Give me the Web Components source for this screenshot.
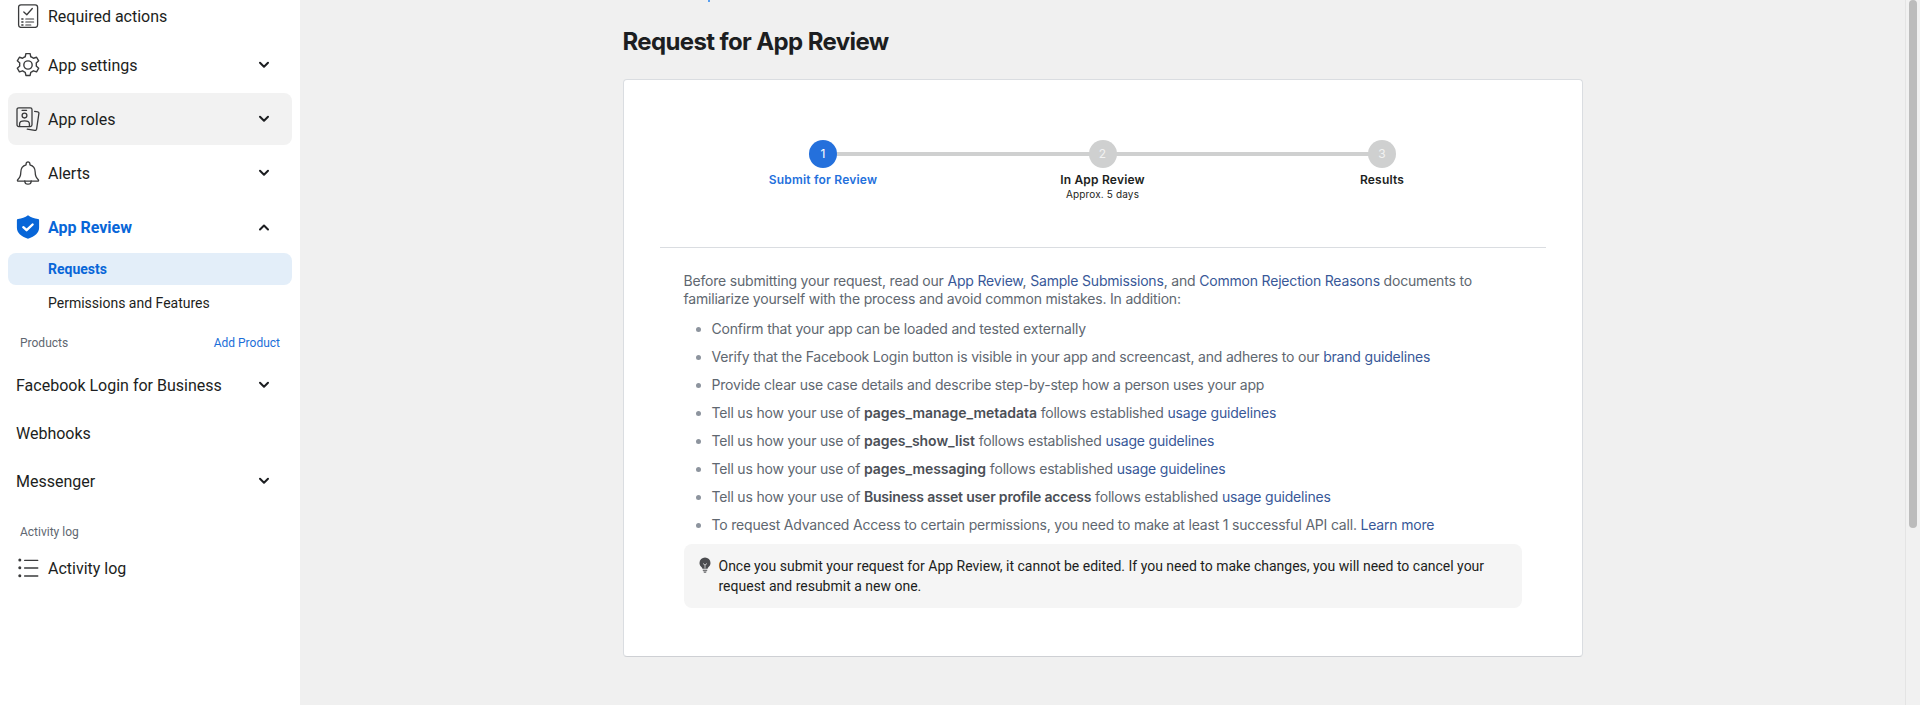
<!DOCTYPE html>
<html><head><meta charset="utf-8">
<style>
html,body{margin:0;height:100%;overflow:hidden;background:#f0f0f0}
body{font-family:"Inter","Liberation Sans",sans-serif}
</style></head><body>
<app-shell>
  <side-nav slot="side">
    <nav-item icon="check" first>Required actions</nav-item>
    <nav-item icon="gear" chevron="down">App settings</nav-item>
    <nav-item icon="badge" chevron="down" hover>App roles</nav-item>
    <nav-item icon="bell" chevron="down">Alerts</nav-item>
    <nav-item icon="shield" chevron="up" active>App Review</nav-item>
    <sub-item selected>Requests</sub-item>
    <sub-item>Permissions and Features</sub-item>
    <nav-label action="Add Product" style="padding-top:10px;padding-bottom:6px">Products</nav-label>
    <nav-item chevron="down" tall>Facebook Login for Business</nav-item>
    <nav-item tall>Webhooks</nav-item>
    <nav-item chevron="down" tall>Messenger</nav-item>
    <nav-label style="padding-top:15px">Activity log</nav-label>
    <nav-item icon="list" tall>Activity log</nav-item>
  </side-nav>
  <main-pane>
    <review-card>
      <step-bar>
        <step-item n="1" state="current">Submit for Review</step-item>
        <step-item n="2" note="Approx. 5 days">In App Review</step-item>
        <step-item n="3" last>Results</step-item>
      </step-bar>
      <review-body>
        <p>Before submitting your request, read our <a>App Review</a>, <a>Sample Submissions</a>, and <a>Common Rejection Reasons</a> documents to<br>familiarize yourself with the process and avoid common mistakes. In addition:</p>
        <ul>
          <li>Confirm that your app can be loaded and tested externally</li>
          <li>Verify that the Facebook Login button is visible in your app and screencast, and adheres to our <a>brand guidelines</a></li>
          <li>Provide clear use case details and describe step-by-step how a person uses your app</li>
          <li>Tell us how your use of <b class="u">pages_manage_metadata</b> follows established <a>usage guidelines</a></li>
          <li>Tell us how your use of <b class="u">pages_show_list</b> follows established <a>usage guidelines</a></li>
          <li>Tell us how your use of <b class="u">pages_messaging</b> follows established <a>usage guidelines</a></li>
          <li>Tell us how your use of <b>Business asset user profile access</b> follows established <a>usage guidelines</a></li>
          <li>To request Advanced Access to certain permissions, you need to make at least 1 successful API call. <a>Learn more</a></li>
        </ul>
        <tip-box>Once you submit your request for App Review, it cannot be edited. If you need to make changes, you will need to cancel your request and resubmit a new one.</tip-box>
      </review-body>
    </review-card>
  </main-pane>
  <fake-scrollbar></fake-scrollbar>
</app-shell>
<script>
const ICONS={
check:`<rect x="2.600" y=".8" width="19" height="22.600" rx="2.400"/><path d="M7.800 8l3 2.800 5.500-6.300"/><path d="M9.800 15h7.800M9.800 18h7.800M9.800 21h5" stroke-width="1.200"/><path d="M5.800 15h1.200M5.800 18h1.200M5.800 21h1.200" stroke-width="1.400"/>`,
gear:`<g transform="translate(12 12) scale(1.160) translate(-12 -12)" stroke-width="1.200"><circle cx="12" cy="12" r="3.600"/><path d="M10.200 2.200h3.600l.6 2.700a7.800 7.800 0 0 1 2.300 1.300l2.700-.9 1.800 3.100-2.100 1.900a7.800 7.800 0 0 1 0 2.600l2.100 1.900-1.800 3.100-2.700-.9a7.800 7.800 0 0 1-2.300 1.300l-.6 2.700h-3.600l-.6-2.700a7.800 7.800 0 0 1-2.300-1.300l-2.700.9-1.800-3.100 2.100-1.900a7.800 7.800 0 0 1 0-2.600l-2.100-1.900 1.800-3.100 2.700.9a7.800 7.800 0 0 1 2.300-1.300z"/></g>`,
badge:`<rect x="1" y=".8" width="15" height="18.800" rx="1.800"/><path d="M18.600 4.300l3.200.5a1.400 1.400 0 0 1 1.100 1.600l-2.300 15.800a1.500 1.500 0 0 1-1.700 1.200l-7.600-1.200"/><path d="M6 3.300h4.600" stroke-width="1.200"/><circle cx="8.500" cy="8.600" r="2.400"/><path d="M3.600 19v-2.300c0-1.700 2-2.800 4.900-2.800s4.900 1.100 4.900 2.800V19"/>`,
bell:`<path d="M12 .9a1.900 1.900 0 0 1 1.900 1.900v1c3.700 1 5.300 4 5.300 7.400 0 4 1.200 5.800 3.100 7.500.6.600.2 1.400-.6 1.400H2.300c-.8 0-1.200-.8-.6-1.400 1.900-1.700 3.100-3.500 3.100-7.500 0-3.400 1.600-6.400 5.300-7.400v-1A1.900 1.900 0 0 1 12 .9z"/><path d="M8.800 19.900a3.200 3.200 0 0 0 6.400 0"/>`,
shield:`<path fill="#0866d8" stroke="none" d="M12 .3c3 2.300 6.200 3.300 10 3.700.700.100 1.100.500 1.100 1.200v7.500c0 5-4 8.800-11.100 11C4.900 21.500.900 17.700.900 12.700V5.200c0-.700.400-1.100 1.100-1.200C5.800 3.600 9 2.600 12 .300z"/><path stroke="#fff" stroke-width="2.400" d="M7.300 12.200l3.300 3 6-5.700"/>`,
list:`<path d="M8.600 4.300h13.200M8.600 12h13.200M8.600 20h13.200" stroke-width="1.300"/><circle cx="3.800" cy="4" r="1.500" fill="#3a3b3c" stroke="none"/><circle cx="3.800" cy="11.800" r="1.500" fill="#3a3b3c" stroke="none"/><circle cx="3.800" cy="19.800" r="1.500" fill="#3a3b3c" stroke="none"/>`
};
function def(name,css,html){
  customElements.define(name,class extends HTMLElement{
    constructor(){super();this.attachShadow({mode:'open'});}
    connectedCallback(){
      this.shadowRoot.innerHTML=`<style>${css}</style>`+(typeof html==='function'?html(this):html);
    }
  });
}
def('app-shell',`:host{display:grid;grid-template-columns:300px 1fr;height:100vh;overflow:hidden}`,`<slot name="side"></slot><div style="display:flex;min-width:0;height:100vh;overflow:hidden"><slot></slot></div>`);
def('side-nav',`:host{display:block;background:#fff;height:100vh;overflow:hidden;box-sizing:border-box;padding:0 8px;font-family:Roboto,"Liberation Sans",sans-serif;color:#1c1e21}
.in{margin-top:-5px;display:flex;flex-direction:column}`,`<div class="in"><slot></slot></div>`);
def('nav-item',`:host{display:block;margin-top:2px;height:52px}
:host([first]){margin-top:0;height:42px}
:host([tall]){margin-top:0;height:48px}
.r{display:flex;align-items:center;height:100%;padding:0 8px;gap:8px;border-radius:8px;font-size:16px;color:#1c1e21;box-sizing:border-box}
:host([hover]) .r{background:#f2f2f2}
:host([active]) .r{color:#0866d8;font-weight:700}
.t{flex:1;white-space:nowrap}
svg.i{width:24px;height:24px;fill:none;stroke:#3a3b3c;stroke-width:1.300;stroke-linejoin:round;stroke-linecap:round;flex:none}
svg.c{width:12px;height:12px;fill:none;stroke:#1c1e21;stroke-width:2;stroke-linecap:round;stroke-linejoin:round;flex:none;margin-right:14px}`,
e=>{const i=e.getAttribute('icon'),c=e.getAttribute('chevron');
return `<div class="r">${i?`<svg class="i" viewBox="0 0 24 24">${ICONS[i]}</svg>`:''}<span class="t"><slot></slot></span>${c?`<svg class="c" viewBox="0 0 12 12"><path d="${c=='up'?'M2 8.500l4-4 4 4':'M2 3.700l4 4 4-4'}"/></svg>`:''}</div>`});
def('sub-item',`:host{display:block;height:36px}
:host([selected]){height:32px}
.r{display:flex;align-items:center;height:100%;padding-left:40px;border-radius:8px;font-size:14px;color:#1c1e21}
:host([selected]) .r{background:#e3eef9;color:#0866d8;font-weight:700}`,`<div class="r"><slot></slot></div>`);
def('nav-label',`:host{display:block}
.r{display:flex;align-items:center;justify-content:space-between;height:24px;padding:0 12px;font-size:12px;color:#606770}
.a{color:#1a6ed8}`,e=>`<div class="r"><span><slot></slot></span>${e.getAttribute('action')?`<span class="a">${e.getAttribute('action')}</span>`:''}</div>`);
def('main-pane',`:host{display:block;flex:1;min-width:0;background:#f0f0f0}
.col{width:960px;margin:0 auto;box-sizing:border-box}
.tick{height:2px;width:2px;margin-left:85px;background:#5aa0f0}
h1{margin:0;padding-top:24px;height:52px;box-sizing:border-box;font-size:24px;line-height:32px;font-weight:700;color:#1c1e21;letter-spacing:-.62px;font-family:Inter,"Liberation Sans",sans-serif}`,
`<div class="col"><div class="tick"></div><h1>Request for App Review</h1><slot></slot></div>`);
def('review-card',`:host{display:block;margin-top:25px;height:578px;box-sizing:border-box;background:#fff;border:1px solid #dadde1;border-bottom-color:#ced0d4;border-radius:4px;padding:60px 36px 0}`,`<slot></slot>`);
def('step-bar',`:host{display:flex;justify-content:center;height:107px;border-bottom:1px solid #dadde1;margin-bottom:24px}`,`<slot></slot>`);
def('step-item',`:host{display:flex;flex-direction:column;align-items:center;width:279.500px;position:relative;font-size:12px;line-height:16px;color:#1c1e21;font-weight:600;letter-spacing:.2px}
.n{width:28px;height:28px;border-radius:50%;background:#cfd0d0;color:#f2f2f2;font-size:12px;font-weight:400;display:flex;align-items:center;justify-content:center;position:relative;z-index:1;margin-bottom:4px}
:host([state=current]) .n{background:#2470dc;color:#fff}
:host([state=current]){color:#2470dc}
.line{position:absolute;left:50%;width:100%;top:12px;height:4px;background:#cfd0d0}
.note{font-size:10px;font-weight:400;line-height:13px;letter-spacing:.15px}`,
e=>`${e.hasAttribute('last')?'':'<div class="line"></div>'}<div class="n">${e.getAttribute('n')}</div><div><slot></slot></div>${e.getAttribute('note')?`<div class="note">${e.getAttribute('note')}</div>`:''}`);
def('review-body',`:host{display:block;padding:0 24px 0 24px;font-size:14px;line-height:18px;color:#606770;letter-spacing:-.19px}
::slotted(p){margin:0 0 12px}
::slotted(ul){margin:0;padding:0 0 0 28px}`,`<slot></slot>`);
def('tip-box',`:host{display:block;margin-top:6px;letter-spacing:0}
.r{display:flex;gap:6px;background:#f5f5f5;border-radius:8px;height:64px;box-sizing:border-box;padding:12px 16px 0 13px;font-family:Roboto,"Liberation Sans",sans-serif;font-size:14px;line-height:20px;color:#1c1e21}
svg{width:16px;height:16px;flex:none;margin-top:1px;fill:#4b4c4f}`,
`<div class="r"><svg viewBox="0 0 16 16"><path d="M8 .5a5.500 5.500 0 0 0-5.500 5.500c0 2 1 3.100 1.900 4.100.5.600.9 1.100 1 1.700h5.200c.1-.6.500-1.100 1-1.700.9-1 1.900-2.100 1.900-4.100A5.500 5.500 0 0 0 8 .5zM5.800 12.800h4.400v.9H5.800zM6.400 14.500h3.200a1.600 1.200 0 0 1-3.200 0z"/><path d="M6 6.500l2 1.500 2-1.500M8 8v3.500" stroke="#f5f5f5" stroke-width=".7" fill="none"/></svg><div><slot></slot></div></div>`);
def('fake-scrollbar',`:host{display:block;flex:none;width:15px;height:100vh;box-sizing:border-box;background:#f1f1f1;border-left:1px solid #e4e4e4}
.t{margin:0 3px;width:8px;height:528px;background:#bcbcbc;border-radius:4px}`,`<div class="t"></div>`);
</script>
<style>
review-body a{color:#385898;text-decoration:none}
review-body b{font-weight:600;color:#4b4f56}
review-body b.u{letter-spacing:-.04px}
review-body li{margin:0 0 10px;color:#606770}
review-body li::marker{color:#8d949e}
</style>
</body></html>
